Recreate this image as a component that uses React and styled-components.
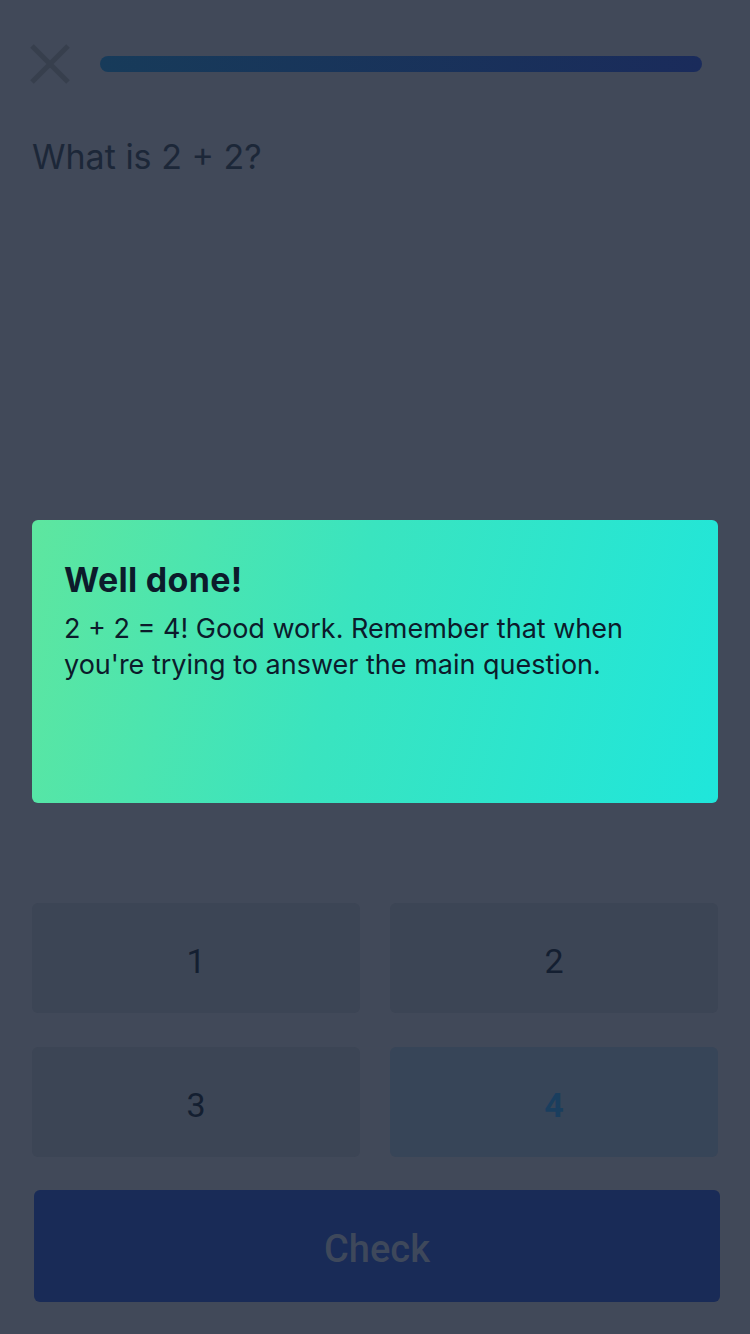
import React from "react";
import styled, { createGlobalStyle } from "styled-components";

const Global = createGlobalStyle`
  html, body {
    margin: 0;
    padding: 0;
    background: #414959;
  }
  * { box-sizing: border-box; }
`;

const Page = styled.div`
  width: 750px;
  height: 1334px;
  padding: 0 32px;
  display: flex;
  flex-direction: column;
  background: #414959;
  font-family: Inter, "Liberation Sans", sans-serif;
  overflow: hidden;
`;

const Header = styled.div`
  display: flex;
  align-items: center;
  height: 40px;
  margin-top: 44px;
`;

const CloseButton = styled.button`
  width: 40px;
  height: 40px;
  margin-left: -2px;
  padding: 0;
  border: none;
  background: none;
  display: flex;
  align-items: center;
  justify-content: center;
`;

const Progress = styled.div`
  flex: 1;
  height: 16px;
  margin: 0 16px 0 30px;
  border-radius: 8px;
  background: linear-gradient(90deg, #173b5a 0%, #1a2b5b 100%);
`;

const Question = styled.h1`
  margin: 52px 0 0;
  font-size: 34px;
  font-weight: 400;
  line-height: 42px;
  color: #1c2738;
`;

const Feedback = styled.div`
  margin-top: 342px;
  height: 283px;
  padding: 40px 32px;
  border-radius: 6px;
  background: linear-gradient(105deg, #5ee69f 0%, #3ae4bf 45%, #1fe6db 100%);
  color: #0c1b2b;
`;

const FeedbackTitle = styled.h2`
  margin: 0;
  font-size: 34px;
  font-weight: 700;
  letter-spacing: 0.3px;
  line-height: 40px;
`;

const FeedbackText = styled.p`
  margin: 11px 0 0;
  font-size: 27px;
  font-weight: 400;
  line-height: 36px;
`;

const Answers = styled.div`
  display: grid;
  grid-template-columns: 1fr 1fr;
  column-gap: 30px;
  row-gap: 34px;
  margin-top: 100px;
`;

const Answer = styled.button`
  height: 110px;
  border: none;
  border-radius: 6px;
  background: ${p => (p.$selected ? "#374558" : "#3c4555")};
  color: ${p => (p.$selected ? "#1a3e5e" : "#141f31")};
  font-family: Roboto, "Liberation Sans", sans-serif;
  font-size: 34px;
  font-weight: ${p => (p.$selected ? 700 : 400)};
  display: flex;
  align-items: center;
  justify-content: center;
  padding: 6px 0 0;
`;

const CheckButton = styled.button`
  margin: 33px -2px 0 2px;
  height: 112px;
  border: none;
  border-radius: 6px;
  background: #192b57;
  color: #3e485b;
  font-family: Roboto, "Liberation Sans", sans-serif;
  font-size: 38px;
  font-weight: 500;
  padding: 6px 0 0;
`;

const CloseIcon = () => (
  <svg width="40" height="40" viewBox="0 0 40 40">
    <path d="M2 2 L38 38 M38 2 L2 38" stroke="#373f4d" strokeWidth="5" fill="none" />
  </svg>
);

const answers = ["1", "2", "3", "4"];

export default function App() {
  return (
    <Page>
      <Global />
      <Header>
        <CloseButton>
          <CloseIcon />
        </CloseButton>
        <Progress />
      </Header>
      <Question>What is 2 + 2?</Question>
      <Feedback>
        <FeedbackTitle>Well done!</FeedbackTitle>
        <FeedbackText>
          2 + 2 = 4! Good work. Remember that when you're trying to answer the main question.
        </FeedbackText>
      </Feedback>
      <Answers>
        {answers.map(a => (
          <Answer key={a} $selected={a === "4"}>
            {a}
          </Answer>
        ))}
      </Answers>
      <CheckButton>Check</CheckButton>
    </Page>
  );
}
